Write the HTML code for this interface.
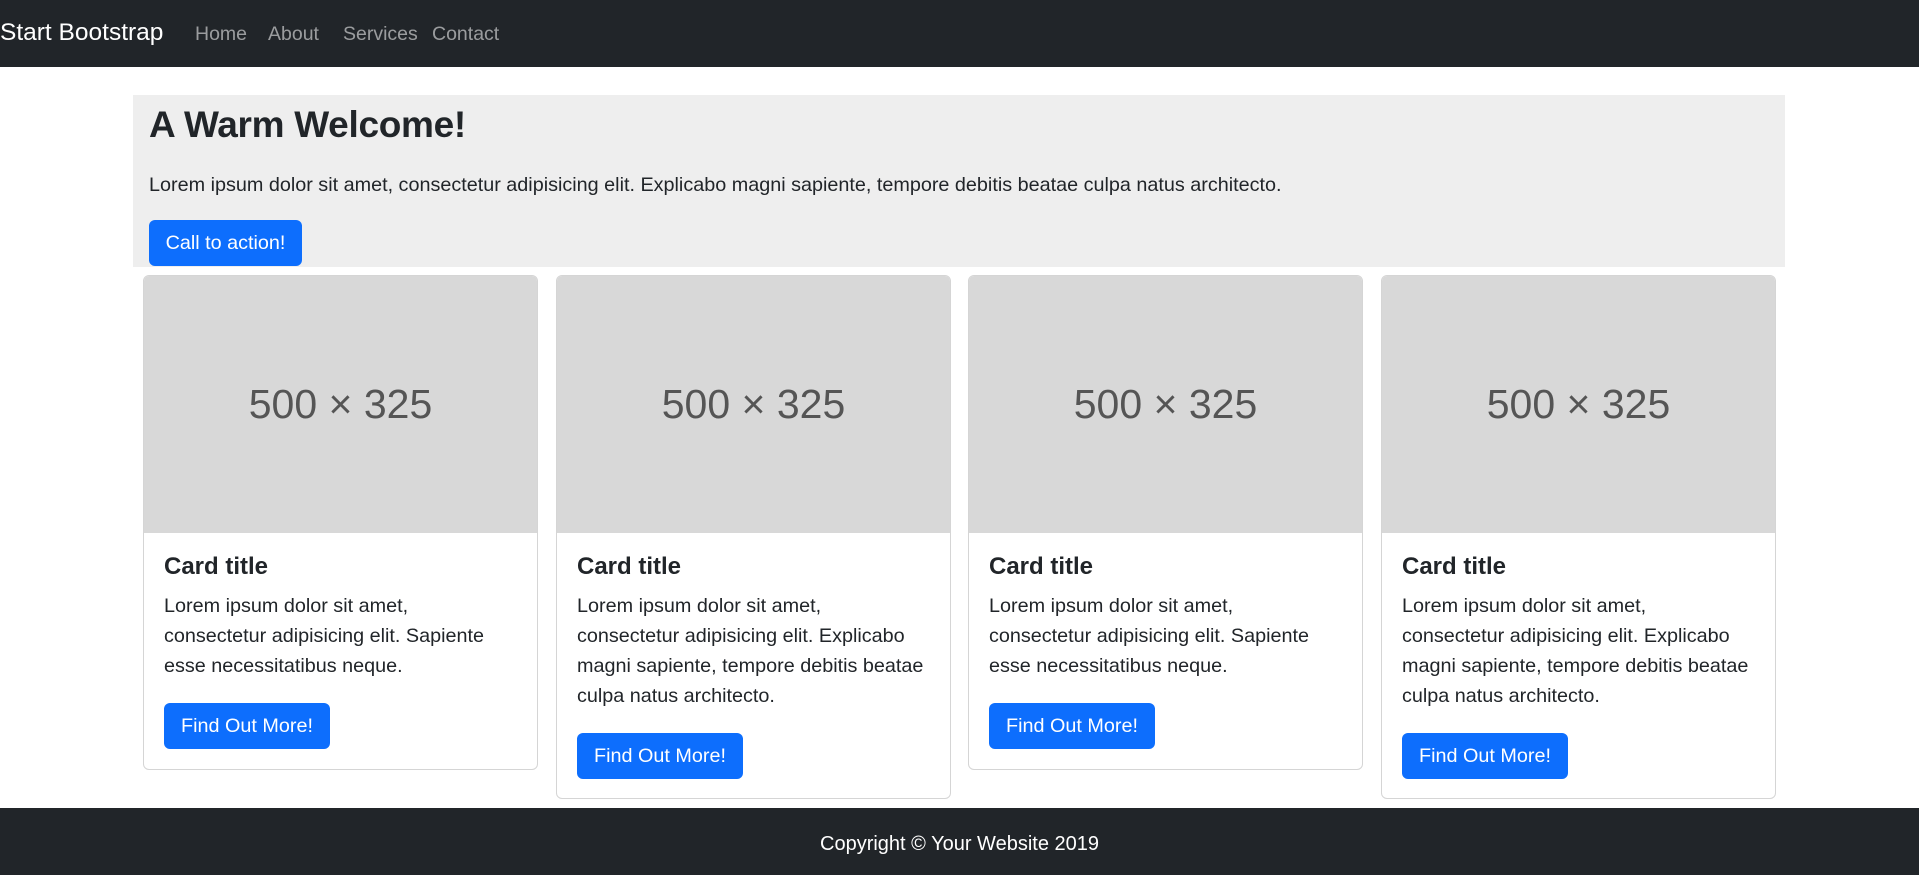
<!DOCTYPE html>
<html><head><meta charset="utf-8"><style>
*{box-sizing:border-box;margin:0;padding:0}
body{width:1919px;height:875px;overflow:hidden;background:#fff;font-family:"Liberation Sans",sans-serif;color:#212529;position:relative}
.nav{position:absolute;left:0;top:0;width:1919px;height:67px;background:#212529}
.brand{position:absolute;left:0;top:19px;font-size:24.5px;color:#fff;white-space:nowrap}
.nav a{position:absolute;top:23px;font-size:19.5px;color:rgba(255,255,255,.55)}
.jumbo{position:absolute;left:133px;top:95px;width:1652px;height:172px;background:#eee}
h1{position:absolute;left:16px;top:9px;font-size:37px;font-weight:bold;white-space:nowrap;letter-spacing:-0.3px}
.jumbo p{position:absolute;left:16px;top:79px;font-size:19.8px;white-space:nowrap}
.btn{position:absolute;background:#0d6efd;color:#fff;border-radius:6px;font-size:19.8px;text-align:center;line-height:46px;height:46px;white-space:nowrap}
.card{position:absolute;top:275px;width:395px;border:1px solid #d5d5d5;border-radius:6px;overflow:hidden;background:#fff}
.img{height:257px;background:#d8d8d8;color:#555;font-size:41px;text-align:center;line-height:257px}
.title{position:absolute;left:20px;top:277px;font-size:24px;font-weight:bold;white-space:nowrap}
.txt{position:absolute;left:20px;top:315px;font-size:19.8px;line-height:30px;white-space:nowrap}
.foot{position:absolute;left:0;top:808px;width:1919px;height:67px;background:#212529;color:#fff;font-size:20px;text-align:center;line-height:72px}
</style></head><body>
<div class="nav"><div class="brand">Start Bootstrap</div>
<a style="left:195px">Home</a><a style="left:268px">About</a><a style="left:343px">Services</a><a style="left:432px">Contact</a></div>
<div class="jumbo"><h1>A Warm Welcome!</h1>
<p>Lorem ipsum dolor sit amet, consectetur adipisicing elit. Explicabo magni sapiente, tempore debitis beatae culpa natus architecto.</p>
<div class="btn" style="left:16px;top:125px;width:153px">Call to action!</div></div>

<div class="card" style="left:143px;height:495px"><div class="img">500 × 325</div>
<div class="title">Card title</div><div class="txt">Lorem ipsum dolor sit amet,<br>consectetur adipisicing elit. Sapiente<br>esse necessitatibus neque.</div>
<div class="btn" style="left:20px;top:427px;width:166px">Find Out More!</div></div>

<div class="card" style="left:556px;height:524px"><div class="img">500 × 325</div>
<div class="title">Card title</div><div class="txt">Lorem ipsum dolor sit amet,<br>consectetur adipisicing elit. Explicabo<br>magni sapiente, tempore debitis beatae<br>culpa natus architecto.</div>
<div class="btn" style="left:20px;top:457px;width:166px">Find Out More!</div></div>

<div class="card" style="left:968px;height:495px"><div class="img">500 × 325</div>
<div class="title">Card title</div><div class="txt">Lorem ipsum dolor sit amet,<br>consectetur adipisicing elit. Sapiente<br>esse necessitatibus neque.</div>
<div class="btn" style="left:20px;top:427px;width:166px">Find Out More!</div></div>

<div class="card" style="left:1381px;height:524px"><div class="img">500 × 325</div>
<div class="title">Card title</div><div class="txt">Lorem ipsum dolor sit amet,<br>consectetur adipisicing elit. Explicabo<br>magni sapiente, tempore debitis beatae<br>culpa natus architecto.</div>
<div class="btn" style="left:20px;top:457px;width:166px">Find Out More!</div></div>

<div class="foot">Copyright © Your Website 2019</div>
</body></html>
